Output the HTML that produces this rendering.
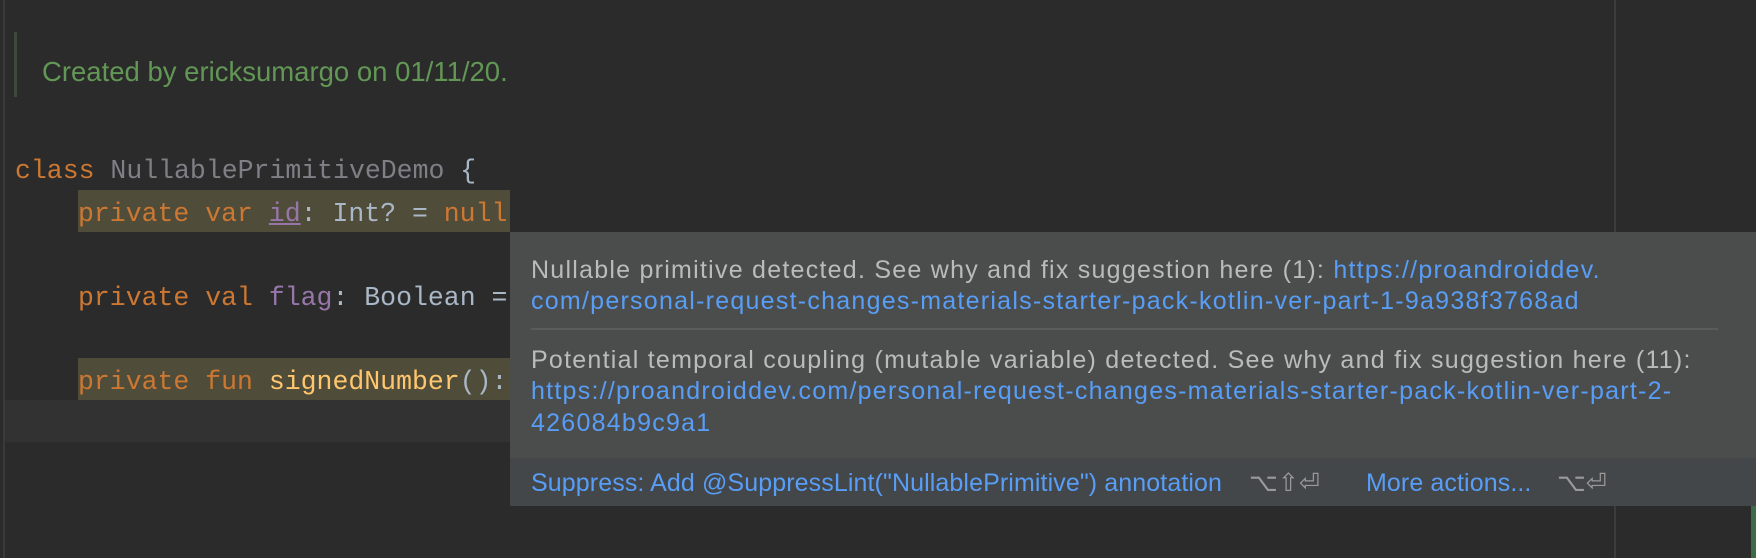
<!DOCTYPE html>
<html><head><meta charset="utf-8"><style>
html,body{margin:0;padding:0;}
body{width:1756px;height:558px;background:#2b2b2b;position:relative;overflow:hidden;font-family:"Liberation Sans",sans-serif;}
.abs{position:absolute;white-space:nowrap;}
.code{font-family:"Liberation Mono",monospace;font-size:26.5px;line-height:42px;height:42px;}
.kw{color:#cc7832}.pv{color:#9876aa}.tx{color:#a9b7c6}.gr{color:#7f7f86}.fn{color:#ffc66d}
.pt{font-size:25px;color:#bbbbbb;line-height:32px;height:32px;letter-spacing:1.25px;}
.ft{font-size:25px;line-height:32px;height:32px;letter-spacing:0.1px;}
.ln{color:#589df6}
</style></head><body>
<div class="abs" style="left:3px;top:0;width:2px;height:558px;background:#3a3a3a"></div>
<div class="abs" style="left:14px;top:32px;width:3px;height:65px;background:#3c4a37"></div>
<div class="abs" style="left:42px;top:56px;font-size:27.5px;line-height:32px;color:#629755">Created by ericksumargo on 01/11/20.</div>

<div class="abs" style="left:78px;top:190px;width:432px;height:42px;background:#4f4c39"></div>
<div class="abs" style="left:78px;top:358px;width:432px;height:42px;background:#4f4c39"></div>
<div class="abs" style="left:5px;top:400px;width:505px;height:42px;background:#323232"></div>
<div class="abs" style="left:1614px;top:0;width:2px;height:558px;background:#3c3c3c"></div>
<div class="abs" style="left:1751px;top:506px;width:5px;height:52px;background:#3d6a47"></div>

<div class="abs code" style="left:15px;top:150px"><span class="kw">class</span> <span class="gr">NullablePrimitiveDemo</span> <span class="tx">{</span></div>
<div class="abs code" style="left:78px;top:193px"><span class="kw">private var</span> <span class="pv" style="text-decoration:underline">id</span><span class="tx">: Int? = </span><span class="kw">null</span></div>
<div class="abs code" style="left:78px;top:277px"><span class="kw">private val</span> <span class="pv">flag</span><span class="tx">: Boolean =</span></div>
<div class="abs code" style="left:78px;top:361px"><span class="kw">private fun</span> <span class="fn">signedNumber</span><span class="tx">():</span></div>

<div class="abs" style="left:510px;top:232px;width:1246px;height:274px;background:#4b4d4d"></div>
<div class="abs" style="left:510px;top:458px;width:1246px;height:48px;background:#43474a"></div>
<div class="abs" style="left:531px;top:328px;width:1187px;height:2px;background:#595b5c"></div>

<div class="abs pt" style="left:531px;top:254px">Nullable primitive detected. See why and fix suggestion here (1): <span class="ln">https://proandroiddev.</span></div>
<div class="abs pt ln" style="left:531px;top:285px">com/personal-request-changes-materials-starter-pack-kotlin-ver-part-1-9a938f3768ad</div>
<div class="abs pt" style="left:531px;top:344px">Potential temporal coupling (mutable variable) detected. See why and fix suggestion here (11):</div>
<div class="abs pt ln" style="left:531px;top:375px">https://proandroiddev.com/personal-request-changes-materials-starter-pack-kotlin-ver-part-2-</div>
<div class="abs pt ln" style="left:531px;top:407px">426084b9c9a1</div>
<div class="abs ft ln" style="left:531px;top:467px">Suppress: Add @SuppressLint("NullablePrimitive") annotation</div>
<div class="abs ft" style="left:1249px;top:467px;color:#9a9a9a">⌥⇧⏎</div>
<div class="abs ft ln" style="left:1366px;top:467px">More actions...</div>
<div class="abs ft" style="left:1557px;top:467px;color:#9a9a9a">⌥⏎</div>
</body></html>
